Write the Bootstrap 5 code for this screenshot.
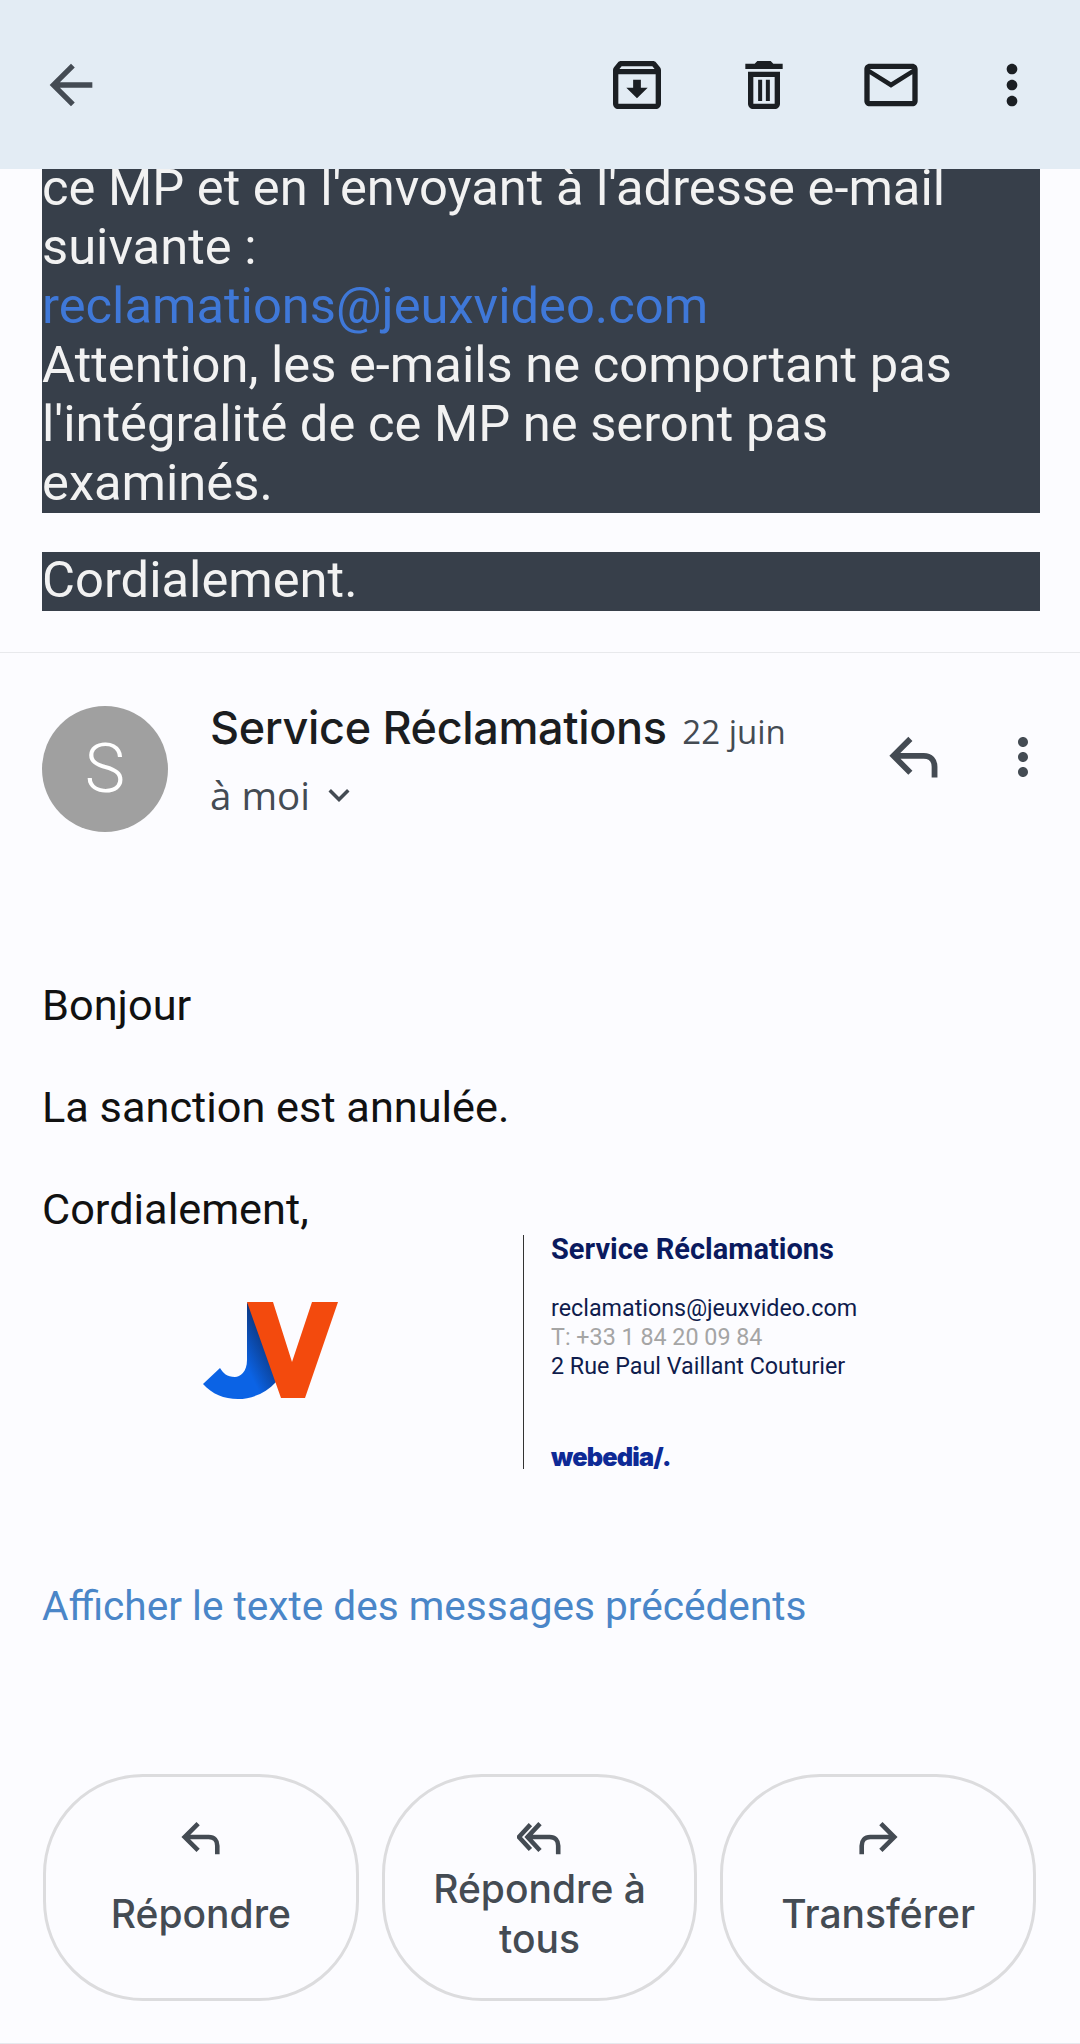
<!DOCTYPE html>
<html lang="fr">
<head>
<meta charset="UTF-8" />
<meta name="viewport" content="width=device-width, initial-scale=1" />
<title>Service Réclamations</title>
<link href="https://cdn.jsdelivr.net/npm/bootstrap@5.3.3/dist/css/bootstrap.min.css" rel="stylesheet">
<style>
    html, body { height: 100%; }
    body { background: #fcfcff; font-family: Roboto, "Liberation Sans", sans-serif; overflow: hidden; }
    .mail-screen { height: 2044px; overflow: hidden; border-bottom: 1px solid #e6e9ee; }

    .top-bar { height: 169px; background: #e3ecf4; padding: 0 36px 0 39px; position: relative; z-index: 2; }
    .top-actions { gap: 63px; }
    .top-actions svg:last-child { margin-left: -6px; }
    .top-bar svg { width: 64px; height: 64px; fill: #1b1f23; display: block; }
    .top-bar .back-icon { fill: #444b53; }

    .quoted-msg { margin: -11.5px 40px 0 42px; font-size: 50.7px; line-height: 59px; color: #f2f2f2; }
    .quoted-msg div { background: #373f4a; padding-bottom: 1.5px; }
    .quoted-msg a { color: #3f78d8; text-decoration: none; }
    .quoted-msg .quoted-gap { margin-top: 39px; line-height: 56px; padding-bottom: 3px; }
    .msg-divider { border-top: 1px solid #e8e9ec; margin-top: 41px; }

    .sender-row { padding: 53px 27px 0 42px; }
    .sender-pic { width: 126px; height: 126px; background: #a0a0a0; color: #fff; font-size: 68px; font-weight: 300; flex: 0 0 126px; }
    .sender-info { margin-left: 42px; font-family: Inter, sans-serif; }
    .sender-name { font-size: 45px; font-weight: 500; color: #1b1d20; line-height: 50px; letter-spacing: -0.35px; margin-top: -3px; }
    .sender-date { font-family: "Open Sans", sans-serif; font-size: 33px; color: #444b53; margin-left: 4px; letter-spacing: 0; }
    .sender-to { font-family: "Open Sans", sans-serif; font-size: 38.5px; color: #444b53; line-height: 50px; margin-top: 13px; }
    .sender-to svg { width: 42px; height: 42px; fill: #444b53; margin-left: 8px; }
    .sender-actions { gap: 50px; margin-top: 21px; }
    .sender-actions svg { display: block; }
    .icon-reply { width: 58px; height: 58px; fill: none; stroke: #444b53; stroke-width: 2.4; }
    .icon-more { width: 60px; height: 60px; fill: #444b53; }

    .mail-body { margin: 148px 40px 0 42px; font-size: 43.3px; line-height: 51px; color: #111; }
    .mail-body p { margin: 0 0 51px; }
    .mail-body p:last-child { margin-bottom: 0; }

    .signature { margin: 0 0 0 42px; height: 234px; }
    .sig-logo { width: 482px; padding: 63px 0 0 158px; border-right: 1px solid #333; }
    .sig-logo svg { width: 142px; height: 104px; display: block; }
    .sig-text { padding-left: 27px; color: #0f1c4d; font-size: 23.3px; line-height: 29px; position: relative; }
    .sig-title { font-size: 29px; font-weight: 700; color: #0a1a5e; line-height: 28px; margin: 0 0 31px; }
    .sig-phone { color: #a5a5a5; }
    .sig-brand { font-family: Inter, sans-serif; font-weight: 900; font-size: 25.3px; letter-spacing: -0.8px; color: #0e2a96; line-height: 24px; margin-top: 64px; }

    .show-quoted { display: block; margin: 112px 0 0 42px; font-size: 40.6px; line-height: 50px; color: #4a86c8; text-decoration: none; }

    .reply-row { margin: 143px 44px 0 43px; gap: 23px; }
    .reply-btn { width: 316px; height: 227px; border: 3px solid #dcdcde; border-radius: 100px; background: transparent;
        font-family: Inter, sans-serif; font-weight: 500; font-size: 39px; line-height: 50px; color: #444b53; padding: 38px 26px 32px; }
    .reply-btn svg { width: 46px; height: 46px; flex: 0 0 46px; fill: none; stroke: #444b53; stroke-width: 2.4; }
    .reply-btn span { flex: 1; display: flex; align-items: center; }
</style>
</head>
<body>
<div class="mail-screen">
    <!-- BARRE DU HAUT -->
    <div class="top-bar d-flex align-items-center justify-content-between">
        <svg class="back-icon" viewBox="0 0 24 24"><path d="M20 11H7.83l5.59-5.59L12 4l-8 8 8 8 1.41-1.41L7.83 13H20v-2z"/></svg>
        <div class="top-actions d-flex align-items-center">
            <svg viewBox="0 0 24 24"><path d="M20.54 5.23l-1.39-1.68C18.88 3.21 18.47 3 18 3H6c-.47 0-.88.21-1.16.55L3.46 5.23C3.17 5.57 3 6.02 3 6.5V19c0 1.1.9 2 2 2h14c1.1 0 2-.9 2-2V6.5c0-.48-.17-.93-.46-1.27zM6.24 5h11.52l.83 1H5.42l.82-1zM5 19V8h14v11H5zm8.45-9h-2.9v3H8l4 4 4-4h-2.55z"/></svg>
            <svg viewBox="0 0 24 24"><path d="M16 9v10H8V9h8m-1.5-6h-5l-1 1H5v2h14V4h-3.5l-1-1zM18 7H6v12c0 1.1.9 2 2 2h8c1.1 0 2-.9 2-2V7z"/><path d="M9.800 10h1.500v8H9.800zM12.700 10h1.500v8h-1.500z"/></svg>
            <svg viewBox="0 0 24 24"><path d="M20 4H4c-1.1 0-2 .9-2 2v12c0 1.1.9 2 2 2h16c1.1 0 2-.9 2-2V6c0-1.1-.9-2-2-2zm0 14H4V8l8 5 8-5v10zm-8-7L4 6h16l-8 5z"/></svg>
            <svg viewBox="0 0 24 24"><path d="M12 8c1.1 0 2-.9 2-2s-.9-2-2-2-2 .9-2 2 .9 2 2 2zm0 2c-1.1 0-2 .9-2 2s.9 2 2 2 2-.9 2-2-.9-2-2-2zm0 6c-1.1 0-2 .9-2 2s.9 2 2 2 2-.9 2-2-.9-2-2-2z"/></svg>
        </div>
    </div>

    <!-- MESSAGE PRECEDENT -->
    <div class="quoted-msg">
        <div>ce MP et en l'envoyant à l'adresse e-mail suivante :<br><a href="#">reclamations@jeuxvideo.com</a><br>Attention, les e-mails ne comportant pas l'intégralité de ce MP ne seront pas examinés.</div>
        <div class="quoted-gap">Cordialement.</div>
    </div>
    <div class="msg-divider"></div>

    <!-- EXPEDITEUR -->
    <div class="sender-row d-flex align-items-start">
        <div class="sender-pic rounded-circle d-flex align-items-center justify-content-center">S</div>
        <div class="sender-info flex-grow-1">
            <div class="sender-name">Service Réclamations <span class="sender-date fw-normal">22 juin</span></div>
            <div class="sender-to d-flex align-items-center">à moi <svg viewBox="0 0 24 24"><path d="M16.590 8.590 12 13.170 7.410 8.590 6 10l6 6 6-6z"/></svg></div>
        </div>
        <div class="sender-actions d-flex align-items-center">
            <svg class="icon-reply" viewBox="0 0 24 24"><path d="M10.500 4.500 3.500 11.500l7 7M3.500 11.500H16c3 0 4.500 2 4.500 4.500v4.500"/></svg>
            <svg class="icon-more" viewBox="0 0 24 24"><path d="M12 8c1.100 0 2-.9 2-2s-.9-2-2-2-2 .9-2 2 .9 2 2 2zm0 2c-1.100 0-2 .9-2 2s.9 2 2 2 2-.9 2-2-.9-2-2-2zm0 6c-1.100 0-2 .9-2 2s.9 2 2 2 2-.9 2-2-.9-2-2-2z"/></svg>
        </div>
    </div>

    <!-- CORPS -->
    <div class="mail-body">
        <p>Bonjour</p>
        <p>La sanction est annulée.</p>
        <p>Cordialement,</p>
    </div>

    <!-- SIGNATURE -->
    <div class="signature d-flex">
        <div class="sig-logo">
            <svg viewBox="0 0 142 104">
                <defs>
                    <linearGradient id="jShade" x1="0.3" y1="0.8" x2="0.85" y2="0.45">
                        <stop offset="0" stop-color="#0b63e5"/>
                        <stop offset="0.45" stop-color="#0b63e5"/>
                        <stop offset="1" stop-color="#0c3a86"/>
                    </linearGradient>
                </defs>
                <path fill="url(#jShade)" d="M47 4 V62 C47 74 40 79 35 79 C27 79 23 75 20 70 L3 86 C12 96 24 101 38 101 C52 101 66 95 76 84 L80 60 Z"/>
                <path fill="#f34a0d" d="M47 4 H73 L92 64 L112 4 H138 L105 100 H81 Z"/>
            </svg>
        </div>
        <div class="sig-text">
            <div class="sig-title">Service Réclamations</div>
            <div>reclamations@jeuxvideo.com</div>
            <div class="sig-phone">T: +33 1 84 20 09 84</div>
            <div>2 Rue Paul Vaillant Couturier</div>
            <div class="sig-brand">webedia/.</div>
        </div>
    </div>

    <a class="show-quoted" href="#">Afficher le texte des messages précédents</a>

    <!-- ACTIONS -->
    <div class="reply-row d-flex">
        <button class="reply-btn btn d-flex flex-column align-items-center">
            <svg viewBox="0 0 24 24"><path d="M10.500 4.500 3.500 11.500l7 7M3.500 11.500H16c3 0 4.500 2 4.500 4.500v4.500"/></svg>
            <span>Répondre</span>
        </button>
        <button class="reply-btn btn d-flex flex-column align-items-center">
            <svg viewBox="0 0 24 24"><path d="M7 5 1 11.500 7 18M12 4.500 5.500 11.500l6.500 7M5.500 11.500H17c3 0 4.500 2 4.500 4.500v4.500"/></svg>
            <span>Répondre à tous</span>
        </button>
        <button class="reply-btn btn d-flex flex-column align-items-center">
            <svg viewBox="0 0 24 24"><path d="M13.500 4.500 20.500 11.500l-7 7M20.500 11.500H8c-3 0-4.500 2-4.500 4.500v4.500"/></svg>
            <span>Transférer</span>
        </button>
    </div>
</div>
<script src="https://cdn.jsdelivr.net/npm/bootstrap@5.3.3/dist/js/bootstrap.bundle.min.js"></script>
</body>
</html>
